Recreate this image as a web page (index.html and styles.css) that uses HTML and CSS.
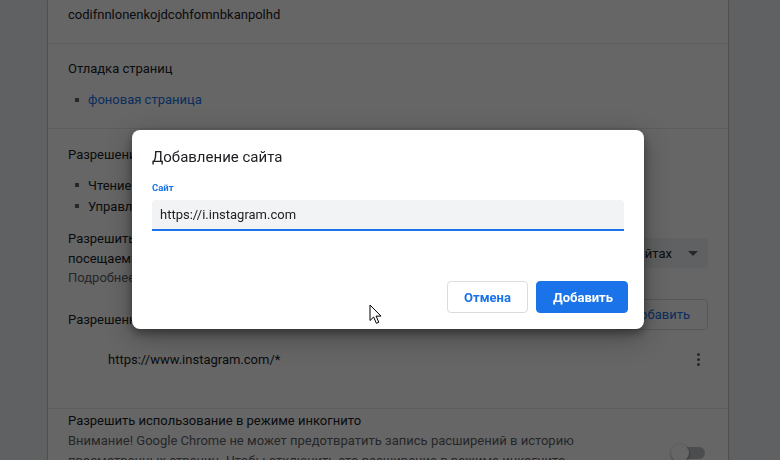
FILE: index.html
```html
<!DOCTYPE html>
<html lang="ru">
<head>
<meta charset="utf-8">
<link rel="stylesheet" href="styles.css">
</head>
<body>
<main class="card">
  <section class="sec sec-id">
    <div class="line">codifnnlonenkojdcohfomnbkanpolhd</div>
  </section>
  <section class="sec sec-debug">
    <div class="line">Отладка страниц</div>
    <ul class="bullets">
      <li><a class="link">фоновая страница</a></li>
    </ul>
  </section>
  <section class="sec sec-perm">
    <div class="line">Разрешения</div>
    <ul class="bullets tight">
      <li>Чтение и изменение всех ваших данных на посещаемых сайтах</li>
      <li>Управление загрузками</li>
    </ul>
    <div class="access">
      <div class="access-text">
        <div class="line2">Разрешить расширению читать и изменять все ваши данные на</div>
        <div class="line2">посещаемых сайтах</div>
        <div class="line2 muted">Подробнее…</div>
      </div>
      <div class="select">На определенных сайтах<span class="caret"></span></div>
    </div>
    <div class="allowed">
      <div class="line">Разрешенные сайты</div>
      <div class="outline-btn">Добавить</div>
    </div>
    <div class="site-row">
      <span>https://www.instagram.com/*</span>
      <span class="kebab"><i></i><i></i><i></i></span>
    </div>
  </section>
  <section class="sec sec-incog">
    <div class="incog-text">
      <div class="line">Разрешить использование в режиме инкогнито</div>
      <div class="muted">Внимание! Google Chrome не может предотвратить запись расширений в историю просмотренных страниц. Чтобы отключить это расширение в режиме инкогнито, отмените выбор этого параметра.</div>
    </div>
    <div class="toggle"><span class="knob"></span></div>
  </section>
</main>

<div class="scrim"></div>

<div class="dialog">
  <div class="dlg-title">Добавление сайта</div>
  <div class="dlg-label">Сайт</div>
  <div class="dlg-input">https://i.instagram.com</div>
  <div class="dlg-actions">
    <button class="btn cancel">Отмена</button>
    <button class="btn primary">Добавить</button>
  </div>
</div>

<svg class="cursor" width="14" height="21" viewBox="0 0 14 21">
  <path d="M1 1 L1 16.5 L4.6 13 L7.4 19.3 L9.8 18.3 L7.1 12.1 L12 12.1 Z" fill="#fff" stroke="#000" stroke-width="1" stroke-linejoin="miter"/>
</svg>
</body>
</html>
```

FILE: styles.css
```css
* { box-sizing: border-box; }
html, body { margin: 0; height: 100%; overflow: hidden; }
body {
  background: #f1f3f4;
  font-family: Roboto, "Noto Sans", Arial, sans-serif;
  font-size: 13px;
  color: #202124;
  position: relative;
}
.card {
  width: 680px;
  margin-left: 48px;
  background: #fff;
  box-shadow: 0 0 0 1px rgba(0,0,0,0.12), 0 1px 3px rgba(0,0,0,0.15);
  min-height: 100%;
}
.sec { padding: 0 20px; border-bottom: 1px solid #e8eaed; }
.line { line-height: 20px; }
.line2 { line-height: 19.5px; }
.muted { color: #5f6368; }
.sec-id { padding-top: 5px; padding-bottom: 18px; }
.sec-debug { padding-top: 15px; padding-bottom: 18px; }
.bullets { margin: 11px 0 0; padding-left: 20px; list-style: none; }
.bullets li { position: relative; line-height: 20px; }
.bullets li::before {
  content: ""; position: absolute; left: -13px; top: 8px;
  width: 4px; height: 4px; background: #5f6368;
}
.bullets.tight { margin-top: 10px; }
.bullets.tight li { line-height: 21px; }
.link { color: #1a73e8; }
.sec-perm { padding-top: 16px; padding-bottom: 37px; }
.access { display: flex; justify-content: space-between; align-items: flex-start; margin-top: 12px; }
.access-text { width: 440px; }
.select {
  flex: none;
  margin-top: 9px;
  background: #f1f3f4;
  border-radius: 4px;
  height: 30px;
  display: flex; align-items: center;
  padding: 0 36px 0 12px;
  position: relative;
  font-size: 13px;
}
.caret {
  position: absolute; right: 10px; top: 13px;
  border-left: 5px solid transparent; border-right: 5px solid transparent;
  border-top: 5px solid #5f6368;
}
.allowed { display: flex; justify-content: space-between; align-items: flex-end; margin-top: 11px; }
.outline-btn {
  border: 1px solid #dadce0; border-radius: 4px; height: 31px; padding: 0 17px;
  display: flex; align-items: center; justify-content: center;
  color: #1a73e8; font-size: 13px;
}
.site-row {
  display: flex; justify-content: space-between; align-items: center;
  padding-left: 40px; margin-top: 19px; height: 22px;
}
.kebab { display: flex; flex-direction: column; gap: 2px; margin-right: 8px; }
.kebab i { width: 3px; height: 3px; border-radius: 50%; background: #5f6368; display: block; }
.sec-incog { padding-top: 2px; display: flex; align-items: flex-start; gap: 40px; border-bottom: none; }
.incog-text { width: 540px; line-height: 20px; }
.toggle {
  margin-top: 36px; margin-left: auto; margin-right: 3px;
  width: 32px; height: 12px; border-radius: 6px; background: #bdc1c6; position: relative; flex: none;
}
.knob {
  position: absolute; left: -2px; top: -3px; width: 18px; height: 18px; border-radius: 50%;
  background: #fff; box-shadow: 0 1px 3px rgba(0,0,0,0.4);
}
.scrim { position: fixed; inset: 0; background: rgba(0,0,0,0.6); }
.dialog {
  position: absolute; left: 132px; top: 130px; width: 512px; height: 199px;
  background: #fff; border-radius: 8px;
  box-shadow: 0 4px 10px rgba(0,0,0,0.35), 0 8px 28px rgba(0,0,0,0.3);
  padding: 17px 20px 16px;
  display: flex; flex-direction: column;
}
.dlg-title { font-size: 15px; line-height: 20px; color: #202124; }
.dlg-label { font-size: 9.5px; font-weight: 700; color: #1a73e8; margin-top: 15px; line-height: 12px; }
.dlg-input {
  margin-top: 6px; height: 31px; background: #f1f3f4; border-bottom: 2px solid #1a73e8;
  border-radius: 4px 4px 0 0; padding: 0 8px; line-height: 29px; font-size: 13px; color: #202124;
}
.dlg-actions { margin-top: auto; display: flex; justify-content: flex-end; gap: 8px; margin-right: -4px; }
.btn {
  font-family: Roboto, "Noto Sans", Arial, sans-serif; font-size: 13px; font-weight: 700;
  height: 32px; border-radius: 4px; padding: 0 16px; cursor: default;
}
.cancel { background: #fff; color: #1a73e8; border: 1px solid #dadce0; width: 81px; }
.primary { background: #1a73e8; color: #fff; border: 1px solid #1a73e8; width: 92px; }
.cursor { position: absolute; left: 369px; top: 304px; }
```
